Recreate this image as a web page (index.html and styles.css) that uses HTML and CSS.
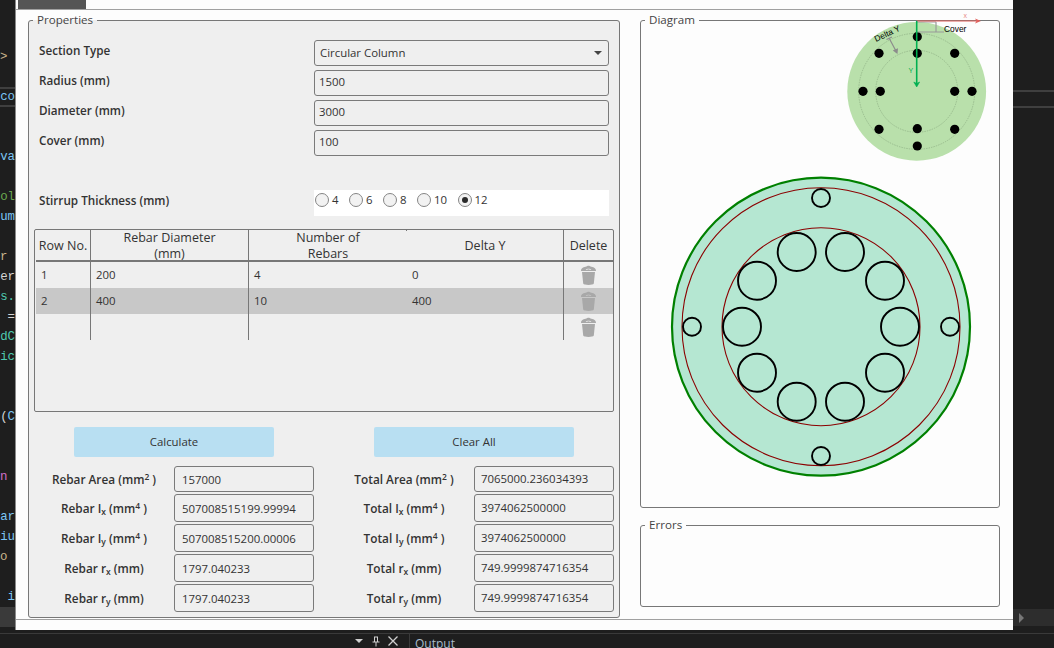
FILE: index.html
```html
<!DOCTYPE html>
<html lang="en">

<head>
    <meta charset="UTF-8" />
    <title>Section Properties</title>
    <link rel="stylesheet" href="styles.css">
</head>

<body>
    <svg class="defs" width="0" height="0">
        <symbol id="trash" viewBox="0 0 15 20">
            <path d="M0 6 C0 3 3 2 5.5 1.6 C6 0.4 9 0.4 9.5 1.6 C12 2 15 3 15 6 Z M4.6 5 C6 3.2 9 3.2 10.4 5 L9.2 5 C8.2 4 6.8 4 5.8 5 Z" fill-rule="evenodd" />
            <path d="M1 7 H14 L12.8 18.6 C12.5 19.6 10 20 7.5 20 C5 20 2.5 19.6 2.2 18.6 Z" />
        </symbol>
    </svg>

    <div class="screen">
        <div class="code-left">
            <div class="code-lines">
                <div class="blue">ci</div><div></div><div></div><div class="tan start">&gt;</div><div></div>
                <div class="blue current">co</div><div></div><div></div><div class="blue">va</div><div></div>
                <div class="green">ol</div><div class="blue">um</div><div></div><div class="tan start">r</div><div class="white">er</div>
                <div class="teal">s.</div><div class="white">=</div><div class="teal">dC</div><div class="teal">ic</div><div></div>
                <div></div><div class="white">(<span class="blue">C</span></div><div></div><div></div><div class="pink start">n</div>
                <div></div><div class="blue">ar</div><div class="blue">iu</div><div class="tan start">o</div><div></div>
                <div class="blue">i</div><div class="scroll-row"></div>
            </div>
        </div>

        <div class="window">
            <div class="tabbar"><div class="tab"></div></div>

            <div class="main">
                <fieldset class="panel properties">
                    <legend>Properties</legend>

                    <div class="form-row">
                        <label>Section Type</label>
                        <div class="field select-field">Circular Column<span class="caret"></span></div>
                    </div>
                    <div class="form-row">
                        <label>Radius (mm)</label>
                        <div class="field">1500</div>
                    </div>
                    <div class="form-row">
                        <label>Diameter (mm)</label>
                        <div class="field">3000</div>
                    </div>
                    <div class="form-row">
                        <label>Cover (mm)</label>
                        <div class="field">100</div>
                    </div>

                    <div class="form-row stirrup">
                        <label>Stirrup Thickness (mm)</label>
                        <div class="radios">
                            <span class="radio"><i></i>4</span>
                            <span class="radio"><i></i>6</span>
                            <span class="radio"><i></i>8</span>
                            <span class="radio"><i></i>10</span>
                            <span class="radio checked"><i></i>12</span>
                        </div>
                    </div>

                    <div class="grid-table">
                        <div class="t-row t-head">
                            <div>Row No.</div>
                            <div>Rebar Diameter<br>(mm)</div>
                            <div class="ticks">Number of<br>Rebars</div>
                            <div>Delta Y</div>
                            <div>Delete</div>
                        </div>
                        <div class="t-row">
                            <div>1</div>
                            <div>200</div>
                            <div>4</div>
                            <div>0</div>
                            <div><svg class="trash"><use href="#trash" /></svg></div>
                        </div>
                        <div class="t-row selected">
                            <div>2</div>
                            <div>400</div>
                            <div>10</div>
                            <div>400</div>
                            <div><svg class="trash"><use href="#trash" /></svg></div>
                        </div>
                        <div class="t-row">
                            <div></div>
                            <div></div>
                            <div></div>
                            <div></div>
                            <div><svg class="trash"><use href="#trash" /></svg></div>
                        </div>
                    </div>

                    <div class="actions">
                        <button>Calculate</button>
                        <button>Clear All</button>
                    </div>

                    <div class="results">
                        <div class="stats">
                            <div class="stat first"><label>Rebar Area (mm<sup>2</sup> )</label><div class="field">157000</div></div>
                            <div class="stat"><label>Rebar I<sub>x</sub> (mm<sup>4</sup> )</label><div class="field">507008515199.99994</div></div>
                            <div class="stat"><label>Rebar I<sub>y</sub> (mm<sup>4</sup> )</label><div class="field">507008515200.00006</div></div>
                            <div class="stat"><label>Rebar r<sub>x</sub> (mm)</label><div class="field">1797.040233</div></div>
                            <div class="stat"><label>Rebar r<sub>y</sub> (mm)</label><div class="field">1797.040233</div></div>
                        </div>
                        <div class="stats totals">
                            <div class="stat first"><label>Total Area (mm<sup>2</sup> )</label><div class="field">7065000.236034393</div></div>
                            <div class="stat"><label>Total I<sub>x</sub> (mm<sup>4</sup> )</label><div class="field">3974062500000</div></div>
                            <div class="stat"><label>Total I<sub>y</sub> (mm<sup>4</sup> )</label><div class="field">3974062500000</div></div>
                            <div class="stat"><label>Total r<sub>x</sub> (mm)</label><div class="field">749.9999874716354</div></div>
                            <div class="stat"><label>Total r<sub>y</sub> (mm)</label><div class="field">749.9999874716354</div></div>
                        </div>
                    </div>
                </fieldset>

                <div class="side">
                    <fieldset class="panel diagram">
                        <legend>Diagram</legend>
                        <!-- viewBox uses window coordinates, the key drawing pokes above the legend line -->
                        <svg class="drawing" viewBox="641 28 358 479" width="358" height="479">
                            <g class="key">
                                <circle cx="916.7" cy="91.3" r="69.4" fill="#b9e0ab" />
                                <circle cx="916.7" cy="91.3" r="58" class="key-dash" />
                                <circle cx="916.7" cy="91.3" r="41" class="key-dash" />
                                <g fill="#000">
                                    <circle cx="917.3" cy="36.7" r="4.6" />
                                    <circle cx="917.3" cy="53.3" r="4.6" />
                                    <circle cx="879" cy="53.3" r="4.6" />
                                    <circle cx="954.7" cy="53.3" r="4.6" />
                                    <circle cx="863" cy="91.3" r="4.6" />
                                    <circle cx="880.3" cy="91.3" r="4.6" />
                                    <circle cx="954.7" cy="91.3" r="4.6" />
                                    <circle cx="972" cy="91.3" r="4.6" />
                                    <circle cx="879" cy="129.3" r="4.6" />
                                    <circle cx="917.3" cy="128.7" r="4.6" />
                                    <circle cx="954.7" cy="129.3" r="4.6" />
                                    <circle cx="917.3" cy="146" r="4.6" />
                                </g>
                                <path d="M916 32 H944 M936 22 V32 M917 22 H936" stroke="#9a9a9a" stroke-width="1.2" fill="none" />
                                <path d="M917 21 H979" stroke="#e0605c" stroke-width="1" fill="none" />
                                <path d="M981 21 L975 18.5 L976.5 21 L975 23.5 Z" fill="#e0605c" />
                                <path d="M916.7 21 V84" stroke="#00b050" stroke-width="1.6" />
                                <path d="M916.7 87 L913.8 82 L916.7 83.5 L919.6 82 Z" fill="#00b050" stroke="#00b050" stroke-width="0.6" />
                                <path d="M886.5 39.5 L892 37 M889.3 38.5 L896.5 52" stroke="#8c8c8c" stroke-width="1.2" fill="none" />
                                <path d="M897.5 54 L892.8 50.6 L898 48.2 Z" fill="#8c8c8c" />
                                <text x="944" y="32" class="key-label">Cover</text>
                                <text x="876" y="42" class="key-label" transform="rotate(-25 876 42)">Delta Y</text>
                                <text x="908.5" y="73" class="key-axis" fill="#00b050">Y</text>
                                <text x="963.5" y="18" class="key-axis" fill="#e88a88">x</text>
                            </g>

                            <circle cx="821" cy="326.7" r="149" fill="#b5e7d2" stroke="#008000" stroke-width="2.2" />
                            <circle cx="821" cy="326.7" r="139" class="ring" />
                            <circle cx="821" cy="326.7" r="99" class="ring" />

                            <g class="bars">
                                <circle cx="821" cy="198" r="9" />
                                <circle cx="821" cy="456" r="9" />
                                <circle cx="692" cy="326.7" r="9" />
                                <circle cx="950" cy="326.7" r="9" />
                                <circle cx="796.7" cy="252" r="19" />
                                <circle cx="845" cy="252" r="19" />
                                <circle cx="757" cy="280.7" r="19" />
                                <circle cx="885" cy="280.7" r="19" />
                                <circle cx="742" cy="326.7" r="19" />
                                <circle cx="900" cy="326.7" r="19" />
                                <circle cx="757" cy="372.7" r="19" />
                                <circle cx="885" cy="372.7" r="19" />
                                <circle cx="796.7" cy="401.7" r="19" />
                                <circle cx="845" cy="401.7" r="19" />
                            </g>
                        </svg>
                    </fieldset>

                    <fieldset class="panel errors">
                        <legend>Errors</legend>
                    </fieldset>
                </div>
            </div>
        </div>

        <div class="code-right">
            <div class="current-line"></div>
            <div class="scroll-arrow"><span></span></div>
        </div>
    </div>

    <div class="dock">
        <span class="dock-caret"></span>
        <svg class="dock-icon" width="8" height="11" viewBox="0 0 8 11">
            <path d="M2 .5 H6 V5.5 H7.5 V6.5 H4.5 V10.5 H3.5 V6.5 H.5 V5.5 H2 Z M3 1.5 V5.5 H5 V1.5 Z" fill="#d0d0d0" fill-rule="evenodd" />
        </svg>
        <svg class="dock-icon" width="10" height="10" viewBox="0 0 10 10">
            <path d="M.5 .5 L9.5 9.5 M9.5 .5 L.5 9.5" stroke="#d0d0d0" stroke-width="1.3" />
        </svg>
        <div class="dock-title">Output</div>
    </div>
</body>

</html>
```

FILE: styles.css
```css
html, body {
    margin: 0;
    padding: 0;
    height: 648px;
    overflow: hidden;
    background-color: #1e1e1e;
    font-family: "Open Sans", "Noto Sans", sans-serif;
    font-size: 11.4px;
    color: #333;
}

.defs {
    display: block;
    height: 0;
}

.screen {
    display: flex;
    height: 630px;
}

/* editor behind the window */
.code-left {
    width: 15px;
    flex: none;
    overflow: hidden;
}

.code-lines {
    margin-top: -13px;
    font-family: "Liberation Mono", monospace;
    font-size: 12.4px;
    line-height: 20px;
    text-align: right;
}

.code-lines > div {
    height: 20px;
    white-space: nowrap;
}

.code-lines .start {
    text-align: left;
}

.code-lines .current {
    border-top: 2px solid #3f3f3f;
    border-bottom: 2px solid #3f3f3f;
    box-sizing: border-box;
    line-height: 16px;
}

.code-lines .scroll-row {
    background-color: #3a3a3a;
}

.blue { color: #7cc4f4; }
.tan { color: #c8b48c; }
.green { color: #6aa84f; }
.white { color: #d4d4d4; }
.teal { color: #4ec9b0; }
.pink { color: #d070c8; }

.code-right {
    flex: 1;
    display: flex;
    flex-direction: column;
    justify-content: space-between;
    padding-top: 90px;
    padding-bottom: 4px;
}

.current-line {
    height: 14px;
    border-top: 2px solid #3f3f3f;
    border-bottom: 2px solid #3f3f3f;
}

.scroll-arrow {
    height: 17px;
    background-color: #2d2d2d;
    display: flex;
    align-items: center;
    padding-left: 6px;
}

.scroll-arrow span {
    border-left: 5px solid #777;
    border-top: 5px solid transparent;
    border-bottom: 5px solid transparent;
}

.dock {
    height: 14px;
    margin-top: 3px;
    border-top: 1px solid #3a3a3a;
    display: flex;
    align-items: center;
    padding-left: 355px;
    overflow: hidden;
}

.dock-caret {
    border-top: 4px solid #d0d0d0;
    border-left: 4px solid transparent;
    border-right: 4px solid transparent;
    margin-right: 9px;
}

.dock-icon {
    margin-right: 8px;
    flex: none;
}

.dock-title {
    margin-left: 3px;
    padding-left: 5px;
    padding-top: 4px;
    border-left: 1px solid #3a3a3a;
    color: #a9bccc;
    font-size: 12px;
    line-height: 16px;
    height: 14px;
}

/* app window */
.window {
    width: 997px;
    flex: none;
    background-color: #fdfdfd;
    border-left: 1px solid #8a8a8a;
}

.tabbar {
    height: 9px;
    border-bottom: 1px solid #a0a0a0;
    padding-left: 2px;
}

.tab {
    width: 68px;
    height: 9px;
    background-color: #555;
}

.main {
    display: flex;
    gap: 20px;
    height: 607px;
    padding: 2px 0 0 12px;
    border-bottom: 1px solid #a0a0a0;
}

.panel {
    margin: 0;
    min-width: 0;
    box-sizing: border-box;
    border: 1px solid #777;
    border-radius: 3px;
}

.panel legend {
    margin-left: 4px;
    padding: 0 4px;
    line-height: 16px;
    font-size: 11.6px;
    color: #444;
}

.properties {
    width: 592px;
    height: 606px;
    padding: 12px 5px 0;
    background-color: #efefef;
}

.properties legend {
    margin-left: -1px;
}

.side {
    width: 360px;
    display: flex;
    flex-direction: column;
    gap: 9px;
}

.diagram {
    height: 496px;
    padding: 0;
}

.errors {
    height: 90px;
    padding: 0;
}

.drawing {
    display: block;
    overflow: visible;
}

.key-dash {
    fill: none;
    stroke: #8eaf84;
    stroke-width: 0.7;
    stroke-dasharray: 1.5 1;
}

.key-label {
    font-family: "Liberation Sans", sans-serif;
    font-size: 8.4px;
    fill: #000;
}

.key-axis {
    font-family: "Liberation Sans", sans-serif;
    font-size: 7px;
}

.ring {
    fill: none;
    stroke: #8b0000;
    stroke-width: 1.1;
}

.bars circle {
    fill: none;
    stroke: #000;
    stroke-width: 1.9;
}

/* form rows */
.form-row {
    display: grid;
    grid-template-columns: 275px 295px;
    padding: 0 5px;
    margin-bottom: 4px;
}

.form-row label {
    font-size: 11.7px;
    font-weight: 600;
    line-height: 20px;
}

.field {
    box-sizing: border-box;
    height: 26px;
    border: 1px solid #7a7a7a;
    border-radius: 3px;
    padding: 0 4px 3px;
    display: flex;
    align-items: center;
    white-space: nowrap;
}

.select-field {
    justify-content: space-between;
    padding: 0 6px 1px 5px;
}

.caret {
    border-top: 4px solid #444;
    border-left: 4px solid transparent;
    border-right: 4px solid transparent;
}

.stirrup {
    margin-top: 34px;
    margin-bottom: 13px;
}

.radios {
    height: 26px;
    background-color: #fff;
    display: flex;
    align-items: flex-start;
    gap: 10.5px;
    padding: 2px 0 0 1px;
    box-sizing: border-box;
}

.radio {
    display: flex;
    align-items: center;
    gap: 3px;
}

.radio i {
    box-sizing: border-box;
    width: 14px;
    height: 14px;
    border: 1px solid #858585;
    border-radius: 50%;
    background-color: #f2f2f2;
    display: flex;
    align-items: center;
    justify-content: center;
}

.radio.checked i::after {
    content: "";
    width: 6px;
    height: 6px;
    border-radius: 50%;
    background-color: #2a2a2a;
}

/* rebar table */
.grid-table {
    box-sizing: border-box;
    height: 183px;
    border: 1px solid #777;
    border-radius: 2px;
    padding-left: 1px;
}

.t-row {
    display: grid;
    grid-template-columns: 55px 158px 158px 157px 49px;
    height: 26px;
    line-height: 25px;
}

.t-row > div {
    box-sizing: border-box;
    padding-left: 5px;
    border-right: 1px solid #777;
    white-space: nowrap;
}

.t-row > div:nth-child(3) {
    border-right: 0;
}

.t-row > div:last-child {
    border-right: 0;
    padding: 3px 0 0;
}

.t-head {
    height: 32px;
    border-bottom: 2px solid #777;
    box-sizing: border-box;
    font-size: 12.5px;
    line-height: 16px;
}

.t-head > div {
    padding: 0 !important;
    text-align: center;
    display: flex;
    align-items: center;
    justify-content: center;
}

.t-head .ticks {
    background: linear-gradient(#777, #777) right top / 1px 1px no-repeat,
        linear-gradient(#777, #777) right bottom / 1px 1px no-repeat;
}

.selected {
    background-color: #c8c8c8;
}

.trash {
    display: block;
    width: 15px;
    height: 20px;
    margin: 0 auto;
    fill: #a8a8a8;
}

/* buttons */
.actions {
    display: flex;
    gap: 100px;
    padding-left: 40px;
    margin-top: 15px;
}

.actions button {
    width: 200px;
    height: 30px;
    border: 0;
    border-radius: 2px;
    background-color: #b8dff2;
    color: #333;
    font: inherit;
    padding: 0 0 2px;
}

/* results */
.results {
    display: grid;
    grid-template-columns: 280px 280px;
    gap: 20px;
    margin-top: 9px;
}

.stats {
    display: flex;
    flex-direction: column;
    gap: 2px;
}

.stat {
    display: grid;
    grid-template-columns: 140px 140px;
    height: 28px;
    align-items: center;
}

.stat.first {
    height: 26px;
}

.stat label {
    font-size: 11.8px;
    font-weight: 600;
    text-align: center;
    line-height: 16px;
}

.stat .field {
    height: 100%;
    padding: 0 0 0 7px;
}

.totals .stat .field {
    padding: 0 0 2px 6px;
}

sub, sup {
    font-size: 8.5px;
    line-height: 0;
}

sub {
    vertical-align: -2px;
}

sup {
    vertical-align: 4px;
}
```
